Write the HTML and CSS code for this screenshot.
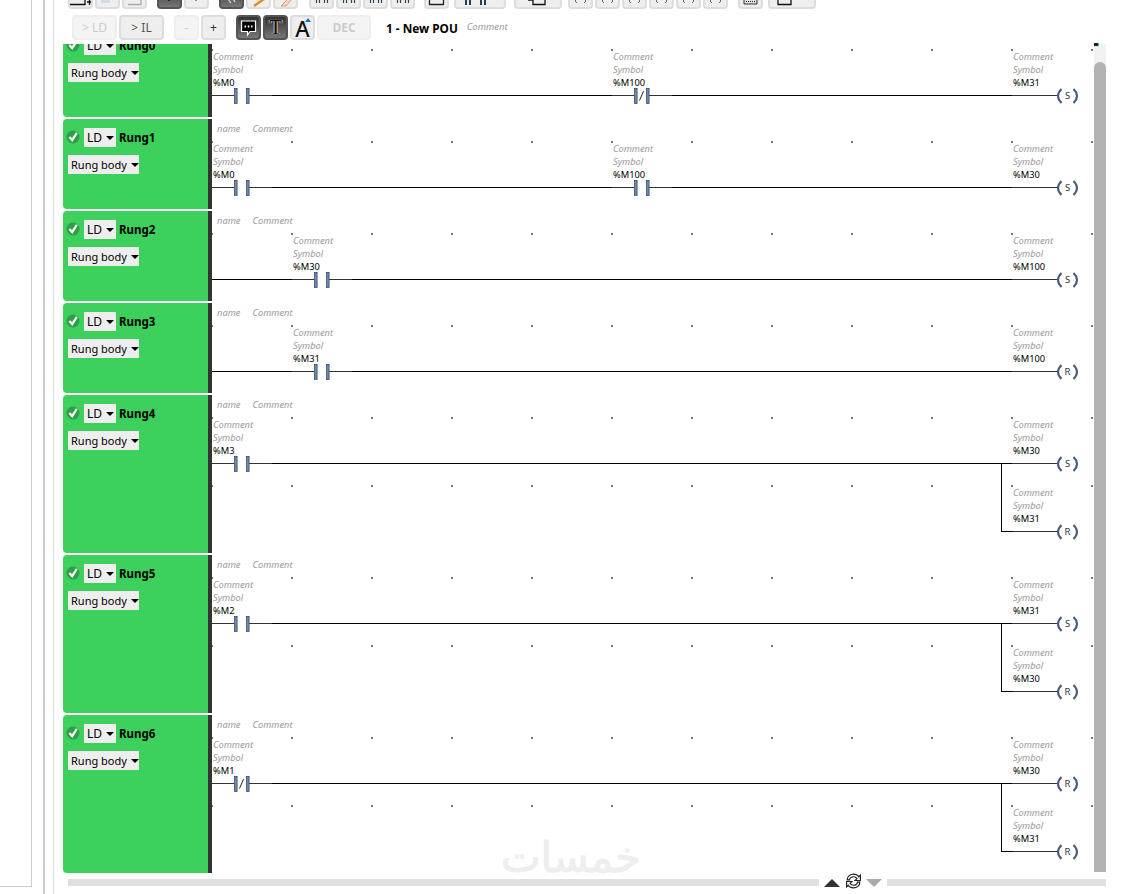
FILE: index.html
```html
<!DOCTYPE html>
<html lang="en">
<head>
<meta charset="utf-8">
<title>New POU</title>
<link rel="stylesheet" href="styles.css">
</head>
<body>
<svg class="defs" width="0" height="0" aria-hidden="true">
  <defs>
    <symbol id="contact" viewBox="0 0 60 16">
      <rect x="0" y="0" width="60" height="16" fill="#fff"/>
      <path d="M0 7.5H22M37 7.5H60" stroke="#333" stroke-width="1"/>
      <rect x="22.5" y="0.5" width="2.6" height="15" fill="#6d8ab5" stroke="#2b3a52" stroke-width=".7"/>
      <rect x="34.5" y="0.5" width="2.6" height="15" fill="#6d8ab5" stroke="#2b3a52" stroke-width=".7"/>
    </symbol>
    <symbol id="ncontact" viewBox="0 0 60 16">
      <rect x="0" y="0" width="60" height="16" fill="#fff"/>
      <path d="M0 7.5H22M37 7.5H60" stroke="#333" stroke-width="1"/>
      <rect x="22.5" y="0.5" width="2.6" height="15" fill="#6d8ab5" stroke="#2b3a52" stroke-width=".7"/>
      <rect x="34.5" y="0.5" width="2.6" height="15" fill="#6d8ab5" stroke="#2b3a52" stroke-width=".7"/>
      <path d="M27.5 12.5L31.5 3" stroke="#222" stroke-width="1"/>
    </symbol>
    <symbol id="coil" viewBox="0 0 72 16">
      <rect x="0" y="0" width="72" height="16" fill="#fff"/>
      <path d="M0 7.5H45" stroke="#333" stroke-width="1"/>
      <path d="M49.5 1Q42.5 8 49.5 15M61.5 1Q68.5 8 61.5 15" fill="none" stroke="#48597a" stroke-width="2"/>
    </symbol>
  </defs>
</svg>
<div class="app">
  <aside class="side"></aside>
  <div class="gutter"></div>
  <main class="main">
    <div class="tools-clip">
      <div class="tools">
        <button class="btn"><svg class="ic" viewBox="0 0 25 8"><path d="M2 5.5H17V0M19 3H24M21.5 0V6" fill="none" stroke="#111" stroke-width="1.3"/></svg></button>
        <button class="btn"><svg class="ic" viewBox="0 0 25 8"><path d="M6 0H15V4H6Z" fill="#d5dce6"/></svg></button>
        <button class="btn"><svg class="ic" viewBox="0 0 25 8"><path d="M6 5.5H19V0" fill="none" stroke="#aaa" stroke-width="1.3"/></svg></button>
        <button class="btn dark g10"><svg class="ic" viewBox="0 0 25 8"><path d="M12 0V2" stroke="#111" stroke-width="1.5"/></svg></button>
        <button class="btn"><svg class="ic" viewBox="0 0 25 8"><path d="M12 0V2" stroke="#555" stroke-width="1.2"/></svg></button>
        <button class="btn dark g10"><svg class="ic" viewBox="0 0 25 8"><path d="M9 0L12 4M14 0L16 3" stroke="#ddd" stroke-width="1.2"/></svg></button>
        <button class="btn"><svg class="ic" viewBox="0 0 25 8"><path d="M18 0L8 7" stroke="#e08a1e" stroke-width="2.4"/></svg></button>
        <button class="btn"><svg class="ic" viewBox="0 0 25 8"><path d="M15 0H19L13 7H8Z" fill="#f8d8c8" stroke="#d9865c" stroke-width=".8"/></svg></button>
        <button class="btn g11"><svg class="ic" viewBox="0 0 25 8"><path d="M7.5 0V4M10.5 0V4M15.5 0V4M18.5 0V4" stroke="#345" stroke-width="1.2"/></svg></button>
        <button class="btn"><svg class="ic" viewBox="0 0 25 8"><path d="M7.5 0V4M10.5 0V4M15.5 0V4M18.5 0V4" stroke="#345" stroke-width="1.2"/></svg></button>
        <button class="btn"><svg class="ic" viewBox="0 0 25 8"><path d="M7.5 0V4M10.5 0V4M15.5 0V4M18.5 0V4" stroke="#345" stroke-width="1.2"/></svg></button>
        <button class="btn"><svg class="ic" viewBox="0 0 25 8"><path d="M7.5 0V4M10.5 0V4M15.5 0V4M18.5 0V4" stroke="#345" stroke-width="1.2"/></svg></button>
        <button class="btn g9"><svg class="ic" viewBox="0 0 25 8"><path d="M5.5 0V5.5H19.5V0" fill="none" stroke="#222" stroke-width="1.3"/></svg></button>
        <button class="btn w52 g5"><svg class="ic" viewBox="0 0 52 8"><path d="M12 0V6M16 0V6M27 0V6M31 0V6" stroke="#2b3a52" stroke-width="2"/></svg></button>
        <button class="btn w48 g8"><svg class="ic" viewBox="0 0 48 8"><path d="M14 1H19V5.5H31V0" fill="none" stroke="#111" stroke-width="1.3"/></svg></button>
        <button class="btn g6"><svg class="ic" viewBox="0 0 25 8"><path d="M9 0L7 2L9 4M16 0L18 2L16 4" fill="none" stroke="#667" stroke-width="1"/></svg></button>
        <button class="btn"><svg class="ic" viewBox="0 0 25 8"><path d="M9 0L7 2L9 4M16 0L18 2L16 4" fill="none" stroke="#667" stroke-width="1"/></svg></button>
        <button class="btn"><svg class="ic" viewBox="0 0 25 8"><path d="M9 0L7 2L9 4M16 0L18 2L16 4" fill="none" stroke="#667" stroke-width="1"/></svg></button>
        <button class="btn"><svg class="ic" viewBox="0 0 25 8"><path d="M9 0L7 2L9 4M16 0L18 2L16 4" fill="none" stroke="#667" stroke-width="1"/></svg></button>
        <button class="btn"><svg class="ic" viewBox="0 0 25 8"><path d="M9 0L7 2L9 4M16 0L18 2L16 4" fill="none" stroke="#667" stroke-width="1"/></svg></button>
        <button class="btn"><svg class="ic" viewBox="0 0 25 8"><path d="M9 0L7 2L9 4M16 0L18 2L16 4" fill="none" stroke="#667" stroke-width="1"/></svg></button>
        <button class="btn g10"><svg class="ic" viewBox="0 0 25 8"><path d="M6 0H19V5H6Z" fill="#ddd" stroke="#333"/><path d="M8 2.5H17" stroke="#333" stroke-dasharray="1 1"/></svg></button>
        <button class="btn w48 g5"><svg class="ic" viewBox="0 0 48 8"><path d="M10 0V5.5H23V0" fill="none" stroke="#111" stroke-width="1.3"/></svg></button>
      </div>
    </div>
    <div class="tools second">
      <button class="btn2 w45 off">&gt; LD</button>
      <button class="btn2 w45">&gt; IL</button>
      <button class="btn2 off g10">-</button>
      <button class="btn2 small">+</button>
      <button class="btn2 dark g10"><svg class="ic2" viewBox="0 0 19 19"><path d="M2.5 3H16.5V13.5H11L8.5 17V13.5H2.5Z" fill="#000" stroke="#fff" stroke-width="1.2"/><path d="M5.5 8.5H7M8.8 8.5H10.3M12 8.5H13.5" stroke="#fff" stroke-width="1.8"/></svg></button>
      <button class="btn2 dark"><span class="tt">T</span></button>
      <button class="btn2 big"><span class="aa">A</span><svg class="caret" viewBox="0 0 6 4"><path d="M0 4L3 0L6 4Z" fill="#1c73c0"/></svg></button>
      <button class="btn2 w54 off dec">DEC</button>
      <strong class="title">1 - New POU</strong>
      <em class="title-note">Comment</em>
    </div>
    <div class="editor">
      <div class="list">

        <section class="rung first">
          <div class="head"><div class="head-top"><span class="check"><svg viewBox="0 0 14 14"><circle cx="7" cy="7" r="6.5" fill="#2e9e47"/><path d="M3.4 7L6.2 10.2L10.8 2.8" fill="none" stroke="#fff" stroke-width="2.2"/></svg></span><span class="drop ld">LD<i class="car"></i></span><b class="rname">Rung0</b></div><span class="drop body-drop">Rung body<i class="car"></i></span></div>
          <div class="graph">
            <div class="names"><span>name</span><span>Comment</span></div>
            <div class="row wire">
              <div class="cell c0"><p class="lab">Comment</p><p class="lab">Symbol</p><p class="var">%M0</p><svg class="sym"><use href="#contact"/></svg></div>
              <div class="cell c5"><p class="lab">Comment</p><p class="lab">Symbol</p><p class="var">%M100</p><svg class="sym"><use href="#ncontact"/></svg></div>
              <div class="cell c10"><p class="lab">Comment</p><p class="lab">Symbol</p><p class="var">%M31</p><svg class="sym coil"><use href="#coil"/><text x="55.5" y="11" class="coil-l">S</text></svg></div>
            </div>
          </div>
        </section>

        <section class="rung">
          <div class="head"><div class="head-top"><span class="check"><svg viewBox="0 0 14 14"><circle cx="7" cy="7" r="6.5" fill="#2e9e47"/><path d="M3.4 7L6.2 10.2L10.8 2.8" fill="none" stroke="#fff" stroke-width="2.2"/></svg></span><span class="drop ld">LD<i class="car"></i></span><b class="rname">Rung1</b></div><span class="drop body-drop">Rung body<i class="car"></i></span></div>
          <div class="graph">
            <div class="names"><span>name</span><span>Comment</span></div>
            <div class="row wire">
              <div class="cell c0"><p class="lab">Comment</p><p class="lab">Symbol</p><p class="var">%M0</p><svg class="sym"><use href="#contact"/></svg></div>
              <div class="cell c5"><p class="lab">Comment</p><p class="lab">Symbol</p><p class="var">%M100</p><svg class="sym"><use href="#contact"/></svg></div>
              <div class="cell c10"><p class="lab">Comment</p><p class="lab">Symbol</p><p class="var">%M30</p><svg class="sym coil"><use href="#coil"/><text x="55.5" y="11" class="coil-l">S</text></svg></div>
            </div>
          </div>
        </section>

        <section class="rung">
          <div class="head"><div class="head-top"><span class="check"><svg viewBox="0 0 14 14"><circle cx="7" cy="7" r="6.5" fill="#2e9e47"/><path d="M3.4 7L6.2 10.2L10.8 2.8" fill="none" stroke="#fff" stroke-width="2.2"/></svg></span><span class="drop ld">LD<i class="car"></i></span><b class="rname">Rung2</b></div><span class="drop body-drop">Rung body<i class="car"></i></span></div>
          <div class="graph">
            <div class="names"><span>name</span><span>Comment</span></div>
            <div class="row wire">
              <div class="cell c1"><p class="lab">Comment</p><p class="lab">Symbol</p><p class="var">%M30</p><svg class="sym"><use href="#contact"/></svg></div>
              <div class="cell c10"><p class="lab">Comment</p><p class="lab">Symbol</p><p class="var">%M100</p><svg class="sym coil"><use href="#coil"/><text x="55.5" y="11" class="coil-l">S</text></svg></div>
            </div>
          </div>
        </section>

        <section class="rung">
          <div class="head"><div class="head-top"><span class="check"><svg viewBox="0 0 14 14"><circle cx="7" cy="7" r="6.5" fill="#2e9e47"/><path d="M3.4 7L6.2 10.2L10.8 2.8" fill="none" stroke="#fff" stroke-width="2.2"/></svg></span><span class="drop ld">LD<i class="car"></i></span><b class="rname">Rung3</b></div><span class="drop body-drop">Rung body<i class="car"></i></span></div>
          <div class="graph">
            <div class="names"><span>name</span><span>Comment</span></div>
            <div class="row wire">
              <div class="cell c1"><p class="lab">Comment</p><p class="lab">Symbol</p><p class="var">%M31</p><svg class="sym"><use href="#contact"/></svg></div>
              <div class="cell c10"><p class="lab">Comment</p><p class="lab">Symbol</p><p class="var">%M100</p><svg class="sym coil"><use href="#coil"/><text x="55.5" y="11" class="coil-l">R</text></svg></div>
            </div>
          </div>
        </section>

        <section class="rung">
          <div class="head"><div class="head-top"><span class="check"><svg viewBox="0 0 14 14"><circle cx="7" cy="7" r="6.5" fill="#2e9e47"/><path d="M3.4 7L6.2 10.2L10.8 2.8" fill="none" stroke="#fff" stroke-width="2.2"/></svg></span><span class="drop ld">LD<i class="car"></i></span><b class="rname">Rung4</b></div><span class="drop body-drop">Rung body<i class="car"></i></span></div>
          <div class="graph">
            <div class="names"><span>name</span><span>Comment</span></div>
            <div class="row wire">
              <div class="cell c0"><p class="lab">Comment</p><p class="lab">Symbol</p><p class="var">%M3</p><svg class="sym"><use href="#contact"/></svg></div>
              <div class="cell c10"><p class="lab">Comment</p><p class="lab">Symbol</p><p class="var">%M30</p><svg class="sym coil"><use href="#coil"/><text x="55.5" y="11" class="coil-l">S</text></svg></div>
            </div>
            <div class="row">
              <div class="branch"></div>
              <div class="cell c10"><p class="lab">Comment</p><p class="lab">Symbol</p><p class="var">%M31</p><svg class="sym coil"><use href="#coil"/><text x="55.5" y="11" class="coil-l">R</text></svg></div>
            </div>
          </div>
        </section>

        <section class="rung">
          <div class="head"><div class="head-top"><span class="check"><svg viewBox="0 0 14 14"><circle cx="7" cy="7" r="6.5" fill="#2e9e47"/><path d="M3.4 7L6.2 10.2L10.8 2.8" fill="none" stroke="#fff" stroke-width="2.2"/></svg></span><span class="drop ld">LD<i class="car"></i></span><b class="rname">Rung5</b></div><span class="drop body-drop">Rung body<i class="car"></i></span></div>
          <div class="graph">
            <div class="names"><span>name</span><span>Comment</span></div>
            <div class="row wire">
              <div class="cell c0"><p class="lab">Comment</p><p class="lab">Symbol</p><p class="var">%M2</p><svg class="sym"><use href="#contact"/></svg></div>
              <div class="cell c10"><p class="lab">Comment</p><p class="lab">Symbol</p><p class="var">%M31</p><svg class="sym coil"><use href="#coil"/><text x="55.5" y="11" class="coil-l">S</text></svg></div>
            </div>
            <div class="row">
              <div class="branch"></div>
              <div class="cell c10"><p class="lab">Comment</p><p class="lab">Symbol</p><p class="var">%M30</p><svg class="sym coil"><use href="#coil"/><text x="55.5" y="11" class="coil-l">R</text></svg></div>
            </div>
          </div>
        </section>

        <section class="rung">
          <div class="head"><div class="head-top"><span class="check"><svg viewBox="0 0 14 14"><circle cx="7" cy="7" r="6.5" fill="#2e9e47"/><path d="M3.4 7L6.2 10.2L10.8 2.8" fill="none" stroke="#fff" stroke-width="2.2"/></svg></span><span class="drop ld">LD<i class="car"></i></span><b class="rname">Rung6</b></div><span class="drop body-drop">Rung body<i class="car"></i></span></div>
          <div class="graph">
            <div class="names"><span>name</span><span>Comment</span></div>
            <div class="row wire">
              <div class="cell c0"><p class="lab">Comment</p><p class="lab">Symbol</p><p class="var">%M1</p><svg class="sym"><use href="#ncontact"/></svg></div>
              <div class="cell c10"><p class="lab">Comment</p><p class="lab">Symbol</p><p class="var">%M30</p><svg class="sym coil"><use href="#coil"/><text x="55.5" y="11" class="coil-l">R</text></svg></div>
            </div>
            <div class="row">
              <div class="branch"></div>
              <div class="cell c10"><p class="lab">Comment</p><p class="lab">Symbol</p><p class="var">%M31</p><svg class="sym coil"><use href="#coil"/><text x="55.5" y="11" class="coil-l">R</text></svg></div>
            </div>
          </div>
        </section>

      </div>
      <div class="vscroll"><i class="corner"></i><div class="thumb"></div></div>
    </div>
    <div class="hbar">
      <div class="track long"></div>
      <svg class="tri" viewBox="0 0 16 8"><path d="M0 8L8 0L16 8Z" fill="#333"/></svg>
      <svg class="sync" viewBox="1 1 16 16"><path d="M3 8C3 4.5 6 2.5 9 2.5C11.5 2.5 13 3.5 14 5L15.5 3.5V8.5H10.5L12.3 6.7C11.5 5.6 10.4 5 9 5C7.2 5 5.6 6.2 5.2 8ZM15 10C15 13.5 12 15.5 9 15.5C6.5 15.5 5 14.5 4 13L2.5 14.5V9.5H7.5L5.7 11.3C6.5 12.4 7.6 13 9 13C10.8 13 12.4 11.8 12.8 10Z" fill="#fff" stroke="#222" stroke-width="1.1"/></svg>
      <svg class="tri" viewBox="0 0 16 8"><path d="M0 0H16L8 8Z" fill="#aaa"/></svg>
      <div class="track rest"></div>
    </div>
    <div class="watermark" dir="rtl">خمسات</div>
  </main>
</div>
</body>
</html>
```

FILE: styles.css
```css
* { box-sizing: border-box; }
html, body { margin: 0; height: 100%; background: #fff; overflow: hidden; }
body { font-family: "Noto Sans", "Open Sans", sans-serif; color: #000; }
.defs { position: absolute; }
p { margin: 0; }

.app { display: flex; height: 894px; align-items: flex-start; }
.side { width: 32px; height: 887px; border-right: 1px solid #ccc; border-bottom: 1px solid #ccc; flex: none; }
.gutter { width: 2px; height: 894px; margin-left: 11px; background: #ccc; flex: none; }
.main { position: relative; width: 1091px; height: 894px; margin-left: 8px; padding-left: 9px; border-left: 1px solid #ddd; flex: none; }

.tools-clip { height: 9px; overflow: hidden; display: flex; align-items: flex-end; margin-left: 5px; }
.tools { display: flex; gap: 2px; align-items: center; flex: none; }
.btn { position: relative; width: 25px; height: 24px; padding: 0; border: 2px solid #ddd; border-radius: 4px; background: #eee; flex: none; display: block; overflow: hidden; }
.btn .ic { position: absolute; left: -2px; bottom: 0; width: calc(100% + 4px); height: 8px; }
.btn.dark { border-color: #555; background: linear-gradient(#333, #777); }
.w52 { width: 52px; }
.w48 { width: 48px; }
.g5 { margin-left: 3px; }
.g6 { margin-left: 4px; }
.g8 { margin-left: 6px; }
.g9 { margin-left: 7px; }
.g10 { margin-left: 8px; }
.g11 { margin-left: 9px; }

.second { height: 25px; margin-top: 6px; margin-left: 9px; }
.btn2 { position: relative; width: 25px; height: 25px; padding: 0; border: 2px solid #ddd; border-radius: 4px; background: #eee; color: #555; font: 12px "Noto Sans", sans-serif; flex: none; display: flex; align-items: center; justify-content: center; }
.btn2.off { background: #f4f4f4; border-color: #eee; color: #ccc; }
.btn2.dark { border-color: #555; background: linear-gradient(#333, #777); }
.w45 { width: 45px; }
.w54 { width: 54px; }
.small { color: #333; }
.dec { font-weight: 700; font-size: 12px; }
.ic2 { width: 19px; height: 19px; }
.tt { font: 400 20px "Liberation Serif", serif; color: #111; text-shadow: 1px 0 0 #e9a65a, -1px 0 0 #8fb6e6, 0 0 1px #fff; }
.big .aa { font: 500 22px "Noto Sans", sans-serif; color: #111; line-height: 1; }
.caret { position: absolute; top: 1px; right: 2px; width: 6px; height: 4px; }
.title { font-size: 11.8px; font-weight: 700; margin-left: 13px; }
.title-note { font-size: 9.5px; color: #999; margin-left: 7px; margin-top: -3px; }

.editor { display: flex; margin-top: 4px; height: 829px; }
.list { width: 1031px; height: 829px; overflow: hidden; flex: none; }
.rung { display: flex; margin-bottom: 2px; }
.rung.first { margin-top: -17px; }
.head { width: 149px; flex: none; background: #3dd05c; border-right: 4px solid #333; border-radius: 4px 0 0 4px; padding: 9px 0 0 5px; }
.head-top { display: flex; align-items: center; height: 19px; margin-bottom: 8px; }
.check { width: 14px; height: 14px; margin: -2px 0 0 -2px; flex: none; }
.check svg { display: block; width: 14px; height: 14px; }
.drop { display: flex; align-items: center; height: 19px; background: #eee; font-size: 11px; padding: 0 3px; white-space: nowrap; }
.ld { width: 32px; margin-left: 4px; font-size: 12px; flex: none; }
.body-drop { width: 71px; }
.car { width: 0; height: 0; margin-left: 4px; border: 4px solid transparent; border-top: 4px solid #000; border-bottom: 0; flex: none; }
.rname { font-size: 11.5px; margin-left: 3px; }

.graph { width: 882px; flex: none; }
.names { height: 22px; display: flex; gap: 12px; padding: 3px 0 0 5px; font-size: 9.3px; line-height: 13px; font-style: italic; color: #999; }
.row { position: relative; height: 68px; display: grid; grid-template-columns: repeat(11, 80px); background-image: radial-gradient(circle at 1px 1px, #777 0, #777 1px, transparent 1.3px); background-size: 80px 68px; background-position: -1px 0; }
.wire { background-image: linear-gradient(#000, #000), radial-gradient(circle at 1px 1px, #777 0, #777 1px, transparent 1.3px); background-size: 844px 1px, 80px 68px; background-position: 0 46px, -1px 0; background-repeat: no-repeat, repeat; }
.cell { padding-top: 1px; height: 68px; }
.c0 { grid-column: 1; }
.c1 { grid-column: 2; }
.c5 { grid-column: 6; }
.c10 { grid-column: 11; }
.lab, .var { height: 13px; line-height: 13px; font-size: 9.3px; padding-left: 1px; white-space: nowrap; }
.lab { font-style: italic; color: #999; }
.var { color: #000; }
.sym { display: block; width: 60px; height: 16px; margin-top: -1px; }
.coil { width: 72px; }
.coil-l { font: 9.5px "Noto Sans", sans-serif; text-anchor: middle; fill: #333; }
.branch { position: absolute; left: 789px; top: -22px; width: 12px; height: 69px; border-left: 1px solid #000; border-bottom: 1px solid #000; }

.vscroll { position: relative; width: 12px; height: 828px; background: #f2f2f2; flex: none; }
.corner { position: absolute; left: 0; top: -1px; width: 5px; height: 3px; background: #222; border-right: 1px solid #3dd05c; }
.thumb { margin-top: 18px; height: 810px; border-radius: 6px 6px 0 0; background: #b3b3b3; }

.hbar { display: flex; align-items: center; height: 18px; margin-top: -3px; margin-left: 5px; }
.track { height: 7px; background: #e0e0e0; margin-top: 7px; flex: none; }
.long { width: 751px; }
.rest { width: 219px; margin-left: 5px; }
.tri { width: 16px; height: 8px; flex: none; margin-top: 7px; }
.tri:first-of-type { margin-left: 5px; }
.sync { width: 17px; height: 18px; margin: 4px 4px 0 5px; flex: none; }

.watermark { position: absolute; left: 447px; top: 836px; width: 140px; font: 400 42px "DejaVu Sans", sans-serif; line-height: 44px; color: #eee; -webkit-text-stroke: 1px #eee; white-space: nowrap; text-align: center; }
```
